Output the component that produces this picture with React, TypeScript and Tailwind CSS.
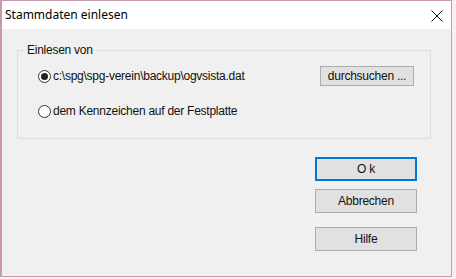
import React, { useState } from 'react';

const App: React.FC = () => {
  const [source, setSource] = useState<'file' | 'disk'>('file');

  const ui = { fontFamily: '"Liberation Sans", Arial, sans-serif' };

  return (
    <div className="w-[456px] h-[279px] bg-[#fbeef2]">
      <div className="w-[452px] h-[277px] border border-l-2 border-[#c99aab] flex flex-col bg-[#f0f0f0]">
        {/* Title bar */}
        <div className="h-[28px] bg-white flex items-center justify-between pl-[3px] pr-[6px] shrink-0">
          <span className="text-[12px] text-black" style={{ fontFamily: '"Noto Sans", "Open Sans", sans-serif' }}>
            Stammdaten einlesen
          </span>
          <svg width="12" height="12" viewBox="0 0 12 12" className="mr-[2px] mt-[2px]">
            <path d="M0.5 0.5 L11.5 11.5 M11.5 0.5 L0.5 11.5" stroke="#111" strokeWidth="1" fill="none" />
          </svg>
        </div>

        {/* Body */}
        <div className="flex-1 pl-[15px] pr-[20px] pt-[14px] text-[12px] tracking-[-0.25px] text-[#111]" style={ui}>
          <fieldset className="border border-[#dcdcdc] h-[96px] pl-[20px] pr-[16px] m-0">
            <legend className="px-[3px] ml-[-14px] leading-[14px]">Einlesen von</legend>

            <div className="flex items-center justify-between mt-[9px] h-[20px]">
              <label className="flex items-center gap-[2px] cursor-default" onClick={() => setSource('file')}>
                <span className="w-[13px] h-[13px] rounded-full border border-[#333] bg-white flex items-center justify-center">
                  {source === 'file' && <span className="w-[7px] h-[7px] rounded-full bg-[#222]" />}
                </span>
                <span>c:\spg\spg-verein\backup\ogvsista.dat</span>
              </label>
              <button className="w-[94px] h-[20px] bg-[#e1e1e1] border border-[#adadad] text-[12px] text-[#111] leading-none">
                durchsuchen ...
              </button>
            </div>

            <label className="flex items-center gap-[2px] mt-[15px] h-[20px] cursor-default" onClick={() => setSource('disk')}>
              <span className="w-[13px] h-[13px] rounded-full border border-[#333] bg-white flex items-center justify-center">
                {source === 'disk' && <span className="w-[7px] h-[7px] rounded-full bg-[#222]" />}
              </span>
              <span>dem Kennzeichen auf der Festplatte</span>
            </label>
          </fieldset>

          <div className="flex flex-col items-end mt-[18px] pr-[14px]">
            <button className="w-[102px] h-[24px] bg-[#e1e1e1] border-2 border-[#0078d7]">O k</button>
            <button className="w-[102px] h-[24px] bg-[#e1e1e1] border border-[#adadad] mt-[8px]">Abbrechen</button>
            <button className="w-[102px] h-[24px] bg-[#e1e1e1] border border-[#adadad] mt-[14px]">Hilfe</button>
          </div>
        </div>
      </div>
    </div>
  );
};

export default App;
